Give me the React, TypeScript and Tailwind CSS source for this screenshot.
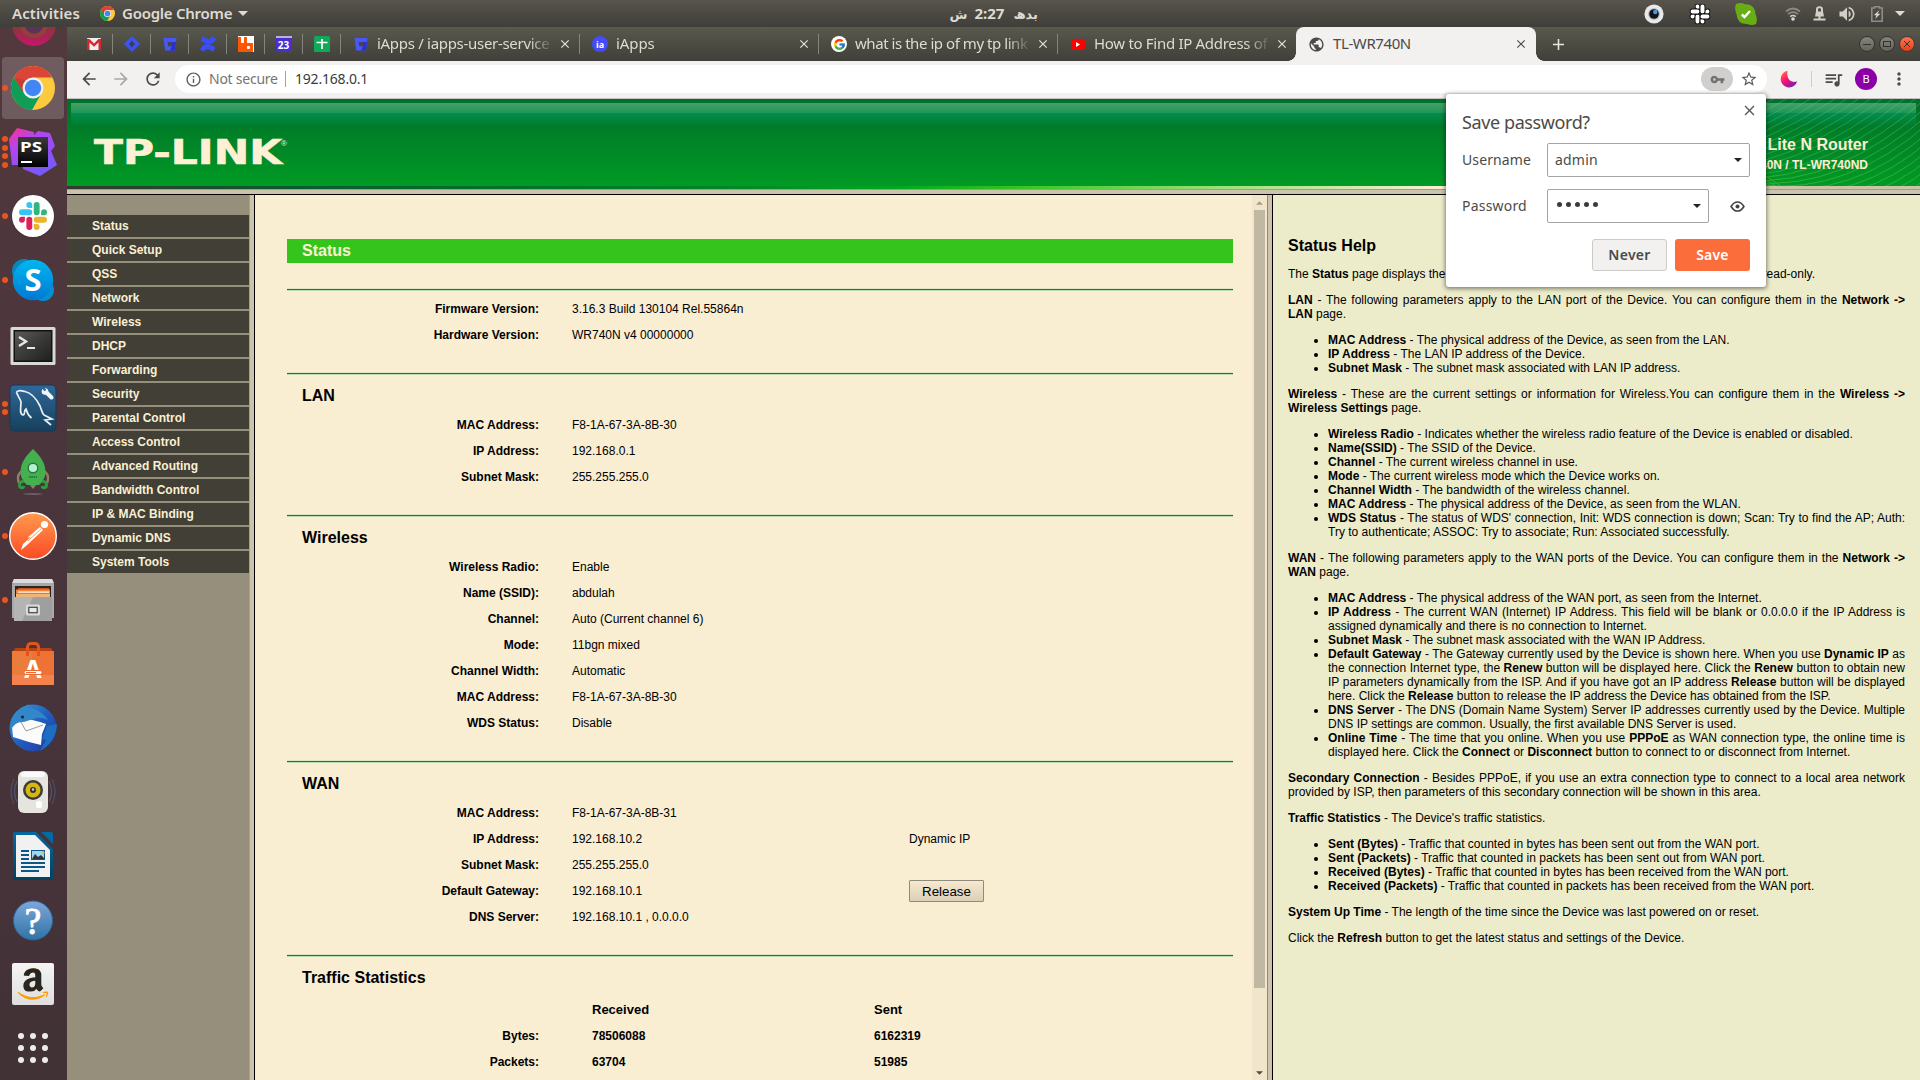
import React from "react";
import {
  MdArrowBack,
  MdArrowForward,
  MdRefresh,
  MdInfoOutline,
  MdVpnKey,
  MdStarBorder,
  MdQueueMusic,
  MdMoreVert,
  MdPublic,
  MdClose,
  MdAdd,
  MdVolumeUp,
} from "react-icons/md";
import { FaConfluence, FaAmazon } from "react-icons/fa";
import { FcGoogle } from "react-icons/fc";
import { SiRabbitmq } from "react-icons/si";

/* ---------- shared icons ---------- */

function ChromeLogo({ size }: { size: number }) {
  return (
    <svg width={size} height={size} viewBox="0 0 48 48">
      <circle cx="24" cy="24" r="24" fill="#fdc93e" />
      <path d="M24 0A24 24 0 0 0 3.2 12L13 30L24 24L24 12.5H45A24 24 0 0 0 24 0Z" fill="#db4437" />
      <path d="M3.2 12A24 24 0 0 0 23 48L33 30L24 34L14 30Z" fill="#0f9d58" />
      <path d="M4 13L14 30L18 16Z" fill="#b3362b" opacity=".5" />
      <circle cx="24" cy="24" r="11.4" fill="#f1f1f1" />
      <circle cx="24" cy="24" r="9" fill="#4285f4" />
    </svg>
  );
}

function SlackLogo({ size, mono }: { size: number; mono?: boolean }) {
  const c = mono ? ["#fff", "#fff", "#fff", "#fff"] : ["#e01e5a", "#36c5f0", "#2eb67d", "#ecb22e"];
  const edge = mono ? { stroke: "#151515", strokeWidth: 2.4, paintOrder: "stroke" } : {};
  return (
    <svg width={size} height={size} viewBox={mono ? "-2 -2 28 28" : "0 0 24 24"} {...edge}>
      <path fill={c[0]} d="M5.042 15.165a2.528 2.528 0 0 1-2.52 2.523A2.528 2.528 0 0 1 0 15.165a2.527 2.527 0 0 1 2.522-2.52h2.52v2.52zM6.313 15.165a2.527 2.527 0 0 1 2.521-2.52 2.527 2.527 0 0 1 2.521 2.52v6.313A2.528 2.528 0 0 1 8.834 24a2.528 2.528 0 0 1-2.521-2.522v-6.313z" />
      <path fill={c[1]} d="M8.834 5.042a2.528 2.528 0 0 1-2.521-2.52A2.528 2.528 0 0 1 8.834 0a2.528 2.528 0 0 1 2.521 2.522v2.52H8.834zM8.834 6.313a2.528 2.528 0 0 1 2.521 2.521 2.528 2.528 0 0 1-2.521 2.521H2.522A2.528 2.528 0 0 1 0 8.834a2.528 2.528 0 0 1 2.522-2.521h6.312z" />
      <path fill={c[2]} d="M18.956 8.834a2.528 2.528 0 0 1 2.522-2.521A2.528 2.528 0 0 1 24 8.834a2.528 2.528 0 0 1-2.522 2.521h-2.522V8.834zM17.688 8.834a2.528 2.528 0 0 1-2.523 2.521 2.527 2.527 0 0 1-2.52-2.521V2.522A2.527 2.527 0 0 1 15.165 0a2.528 2.528 0 0 1 2.523 2.522v6.312z" />
      <path fill={c[3]} d="M15.165 18.956a2.528 2.528 0 0 1 2.523 2.522A2.528 2.528 0 0 1 15.165 24a2.527 2.527 0 0 1-2.52-2.522v-2.522h2.52zM15.165 17.688a2.527 2.527 0 0 1-2.52-2.523 2.526 2.526 0 0 1 2.52-2.52h6.313A2.527 2.527 0 0 1 24 15.165a2.528 2.528 0 0 1-2.522 2.523h-6.313z" />
    </svg>
  );
}

function BitbucketLogo() {
  return (
    <svg width="14" height="13" viewBox="0 0 14 13">
      <path d="M.5 0H13.500L11.800 12.500H2.200Z" fill="#4a57f7" />
      <path d="M4.500 4H13L11.800 12.500H7L9 8.300Z" fill="#2c2fd0" />
      <path d="M4.600 4.200H9.500L8.900 8.300H5.200Z" fill="#48473f" />
    </svg>
  );
}

function Caret({ className }: { className: string }) {
  return (
    <svg viewBox="0 0 10 5" className={className}>
      <path d="M0 0H10L5 5Z" fill="currentColor" />
    </svg>
  );
}

/* ---------- desktop top bar ---------- */

function TopBar() {
  return (
    <div className="flex h-[27px] shrink-0 items-center bg-linear-to-b from-[#57544c] to-[#403e39] font-['Noto_Sans',sans-serif] text-[15px] font-semibold text-[#dfdbd2]">
      <span className="w-[96px] shrink-0 pl-3 tracking-[0.1px]">Activities</span>
      <div className="flex w-[852px] items-center pl-1">
        <ChromeLogo size={15} />
        <span className="ml-[7px] whitespace-nowrap tracking-[-0.25px]">Google Chrome</span>
        <Caret className="ml-[6px] h-[5px] w-[10px]" />
      </div>
      <div dir="rtl" className="w-[90px] whitespace-nowrap font-['DejaVu_Sans',sans-serif] text-[13px] font-bold leading-[27px]">
        <span>بدھ</span>
        <span className="mr-[9px] font-['Noto_Sans'] text-[15px]">2:27</span>
        <span className="mr-[7px]">ش</span>
      </div>
      <div className="ml-auto flex items-center pr-[15px]">
        <svg width="20" height="20" viewBox="0 0 20 20">
          <circle cx="10" cy="10" r="9.6" fill="#e9e9e9" />
          <circle cx="10" cy="10" r="6" fill="#b9bcc0" />
          <circle cx="10" cy="10" r="4.8" fill="#10151c" />
          <circle cx="11.3" cy="8" r="2.2" fill="#4a9ad8" />
        </svg>
        <span className="ml-[25px]">
          <SlackLogo size={22} mono />
        </span>
        <svg width="22" height="22" viewBox="0 0 22 22" className="ml-[24px]">
          <path d="M1 1Q6-1 10 1.200Q20 1 20.500 11Q23 16 21 21Q17 23 12 21Q2 21 1.500 11Q-1 5 1 1Z" fill="#68ad14" />
          <path d="M6.800 11.500L9.500 14L15 8" fill="none" stroke="#fff" strokeWidth="2.400" />
        </svg>
        <svg width="16" height="14" viewBox="0 0 16 14" className="ml-[28px]" fill="none" strokeWidth="1.700">
          <path d="M1 4.500Q8-1.500 15 4.500" stroke="#8b8880" />
          <path d="M3 7.200Q8 3 13 7.200" stroke="#8b8880" />
          <path d="M5.200 9.600Q8 7.400 10.800 9.600" stroke="#d3cfc6" />
          <circle cx="8" cy="12" r="1.800" fill="#dfdbd2" />
        </svg>
        <svg width="13" height="15" viewBox="0 0 13 15" className="ml-[12px]" fill="#d3cfc6">
          <path fillRule="evenodd" d="M3 5.500V3.500A3.500 3.300 0 0 1 10 3.500V5.500L11 10.500H7.500V12.500H12.500V14.500H.5V12.500H5.500V10.500H2ZM5 5.500H8V3.500A1.500 1.500 0 0 0 5 3.500Z" />
        </svg>
        <MdVolumeUp size={20} className="ml-[11px] text-[#d3cfc6]" />
        <svg width="12" height="16" viewBox="0 0 12 16" className="ml-[14px]">
          <path d="M3.500 2V.8H8.500V2H11.200V15.200H.8V2Z" fill="none" stroke="#8f8c85" strokeWidth="1.600" />
          <path d="M8.500 4L2.800 9.200H5.600L4 13L9.300 7.800H6.500Z" fill="#dfdbd2" />
        </svg>
        <Caret className="ml-[12px] h-[5px] w-[10px]" />
      </div>
    </div>
  );
}

/* ---------- dock ---------- */

function DockItem({ dots = 0, active = false, children }: { dots?: number; active?: boolean; children: React.ReactNode }) {
  return (
    <div className="flex h-16 items-center">
      <div className="flex w-[9px] flex-col items-end gap-[2.500px] pr-[1px]">
        {Array.from({ length: dots }).map((_, i) => (
          <span key={i} className="z-10 size-[6px] rounded-full bg-[#e95420]" />
        ))}
      </div>
      <div className={active ? "-ml-[7px] flex h-[62px] w-[62px] items-center justify-center rounded-[4px] bg-white/18" : "ml-0 flex w-12 items-center justify-center"}>
        {children}
      </div>
    </div>
  );
}

function Dock() {
  return (
    <div className="flex w-[67px] shrink-0 flex-col overflow-hidden bg-linear-to-b from-[#51393c] via-[#4a343c] to-[#413236]">
      <div className="flex h-[29px] shrink-0 flex-col items-center overflow-hidden">
        <svg width="44" height="44" viewBox="0 0 44 44" className="-mt-[25px] shrink-0">
          <defs>
            <linearGradient id="ff" x1="0" y1="0" x2="0" y2="1">
              <stop offset=".55" stopColor="#84383c" />
              <stop offset="1" stopColor="#c8146a" />
            </linearGradient>
          </defs>
          <circle cx="22" cy="22" r="22" fill="url(#ff)" />
          <circle cx="22" cy="22" r="14" fill="#943f3c" />
          <circle cx="22" cy="22" r="9.500" fill="#5b3358" />
        </svg>
      </div>
      <DockItem dots={1} active>
        <ChromeLogo size={44} />
      </DockItem>
      <DockItem dots={4}>
        <svg width="48" height="48" viewBox="0 0 48 48">
          <defs>
            <linearGradient id="ps" x1="0" y1="0" x2=".6" y2="1">
              <stop offset="0" stopColor="#ff318c" />
              <stop offset=".35" stopColor="#b345f1" />
              <stop offset="1" stopColor="#765af8" />
            </linearGradient>
            <linearGradient id="psb" x1="0" y1="0" x2="0" y2="1">
              <stop offset="0" stopColor="#3b3b3d" />
              <stop offset="1" stopColor="#000" />
            </linearGradient>
          </defs>
          <path d="M0 11L8 0L25 4V7L29 3L41 5L46 18L42 23L48 37L31 48L14 41V37L3 37Z" fill="url(#ps)" />
          <rect x="9" y="9" width="30" height="30" fill="url(#psb)" />
          <rect x="12" y="33" width="11" height="2" fill="#fff" />
          <text x="11" y="24" fontSize="15" fontWeight="700" fill="#fff" fontFamily="Noto Sans" textLength="22" lengthAdjust="spacingAndGlyphs">PS</text>
        </svg>
      </DockItem>
      <DockItem dots={1}>
        <span className="flex size-[42px] items-center justify-center rounded-full bg-white shadow">
          <SlackLogo size={28} />
        </span>
      </DockItem>
      <DockItem dots={1}>
        <svg width="42" height="42" viewBox="0 0 42 42">
          <defs>
            <linearGradient id="sk" x1="0" y1="0" x2="0" y2="1">
              <stop offset="0" stopColor="#00b7f0" />
              <stop offset="1" stopColor="#0078d4" />
            </linearGradient>
          </defs>
          <circle cx="12" cy="12" r="12" fill="#0a86b8" />
          <circle cx="31" cy="31" r="11" fill="#0490d0" />
          <circle cx="21" cy="21" r="20.200" fill="url(#sk)" />
          <text x="21" y="32" textAnchor="middle" fontSize="31" fontWeight="700" fill="#fff" fontFamily="Open Sans">S</text>
        </svg>
      </DockItem>
      <DockItem>
        <svg width="46" height="40" viewBox="0 0 46 40" className="mt-[4px]">
          <defs>
            <linearGradient id="tm" x1="0" y1="0" x2="1" y2="1">
              <stop offset="0" stopColor="#5a5a58" />
              <stop offset=".5" stopColor="#3a3a39" />
              <stop offset="1" stopColor="#202020" />
            </linearGradient>
          </defs>
          <rect x=".5" y="1" width="45" height="38" rx="1.500" fill="#d8d8d6" />
          <rect x="3.500" y="4" width="39" height="32" fill="#111" />
          <rect x="5" y="5.500" width="36" height="29" fill="url(#tm)" />
          <path d="M9 11L16 15.500L9 20" fill="none" stroke="#e6e6e6" strokeWidth="2.400" />
          <rect x="17" y="21" width="8" height="2" fill="#e6e6e6" />
        </svg>
      </DockItem>
      <DockItem dots={2}>
        <svg width="48" height="48" viewBox="0 0 48 48">
          <defs>
            <linearGradient id="my" x1="0" y1="0" x2="0" y2="1">
              <stop offset="0" stopColor="#2f6899" />
              <stop offset="1" stopColor="#17405c" />
            </linearGradient>
          </defs>
          <rect x="1" y="1" width="46" height="46" rx="4" fill="url(#my)" stroke="#1b3952" />
          <path d="M7.500 8C10 5.500 13 7 16 7.500C23 9 28 16 31 22C33 27 33 29 35 31L43 35L36 36L42 41M7.500 8C8 11 11 14 12 18C12 24 10 30 14 31C17 30 14 27 17 25C18 29 20 32 22.500 34" fill="none" stroke="#e8f1f6" strokeWidth="1.700" />
          <path d="M37 8L42.500 13.500" stroke="#eef6fa" strokeWidth="4" strokeLinecap="round" />
          <circle cx="36" cy="7.500" r="3.300" fill="#eef6fa" />
          <path d="M33 3L36.500 6.500" stroke="#2f6899" strokeWidth="2.200" />
        </svg>
      </DockItem>
      <DockItem dots={1}>
        <svg width="34" height="46" viewBox="0 0 34 46">
          <path d="M6 22Q0 26 3 34M28 22Q34 26 31 34" fill="none" stroke="#8f805f" strokeWidth="2.400" />
          <path d="M13 35H21L17 40Z" fill="#8f805f" />
          <path d="M17 0Q32 14 29 27Q27 33 23 36H11Q7 33 5 27Q2 14 17 0Z" fill="#45b04f" />
          <circle cx="17" cy="19" r="4.800" fill="#b8f0cf" stroke="#257a3f" strokeWidth="1.400" />
          <path d="M13 28H21" stroke="#257a3f" strokeWidth="2" strokeDasharray="1.500 .8" />
          <path d="M8 32Q2 33 4 38Q7 40 8 37M26 32Q32 33 30 38Q27 40 26 37" fill="none" stroke="#2f9e41" strokeWidth="3" />
          <ellipse cx="17" cy="45" rx="10" ry=".8" fill="#7a696d" />
        </svg>
      </DockItem>
      <DockItem dots={1}>
        <svg width="48" height="48" viewBox="0 0 48 48">
          <defs>
            <linearGradient id="pm" x1="0" y1="0" x2="0" y2="1">
              <stop offset="0" stopColor="#ff9a4d" />
              <stop offset="1" stopColor="#fb4a25" />
            </linearGradient>
          </defs>
          <circle cx="24" cy="24" r="23.300" fill="url(#pm)" stroke="#fff" strokeWidth="1.400" />
          <circle cx="35.500" cy="12.500" r="3.600" fill="#fff" />
          <path d="M31 15L34 18L17 34L12 38L14 32L22 25L18 26Z" fill="#fff" />
          <path d="M32 17L19 29M29 15L20 23" stroke="#ff8040" strokeWidth=".8" />
        </svg>
      </DockItem>
      <DockItem dots={1}>
        <svg width="42" height="44" viewBox="0 0 42 44">
          <path d="M2 1H40L42 6V40H0V6Z" fill="#a9a9a9" />
          <path d="M2 1H40L42 5H0Z" fill="#dcdcdc" />
          <rect x="3" y="8" width="36" height="12" fill="#262626" />
          <rect x="6" y="10" width="31" height="3" fill="#c5531c" />
          <rect x="4" y="11.500" width="34" height="4" fill="#f3843a" />
          <rect x="6" y="13.500" width="31" height="1.200" fill="#fff" />
          <rect x="4" y="15.500" width="34" height="4" fill="#efb571" />
          <path d="M2 19H40V43H2Z" fill="#9f9f9f" />
          <path d="M2 19H21L10 43H2Z" fill="#b4b4b4" />
          <rect x="14" y="26.500" width="14" height="11" rx="1.500" fill="#d9d9d9" />
          <rect x="16.800" y="29.300" width="8.400" height="5.400" fill="#e8e8e8" stroke="#444" strokeWidth="1.200" />
        </svg>
      </DockItem>
      <DockItem>
        <svg width="42" height="44" viewBox="0 0 42 44">
          <path d="M1 10L3 6H39L41 10Z" fill="#b8420f" />
          <rect y="9" width="42" height="34" fill="#ee7236" />
          <rect y="9" width="20" height="24" fill="#e8863f" opacity=".6" />
          <rect y="33" width="42" height="10" fill="#f3824d" />
          <path d="M15.500 14V5Q16 1.500 19 1.500H23Q26 1.500 26.500 5V14" fill="none" stroke="#e25417" strokeWidth="3" />
          <text x="21" y="36" textAnchor="middle" fontSize="25" fontWeight="700" fill="#fff" fontFamily="Noto Sans">A</text>
          <rect x="12" y="28.500" width="18" height="4" rx="2" fill="#fff" stroke="#ee6a2f" />
          <rect x="14" y="30" width="10" height="1.200" fill="#ee6a2f" />
        </svg>
      </DockItem>
      <DockItem>
        <svg width="48" height="48" viewBox="0 0 48 48">
          <defs>
            <linearGradient id="tb" x1="0" y1="0" x2="1" y2="1">
              <stop offset="0" stopColor="#3aa0dd" />
              <stop offset=".5" stopColor="#1f5fc0" />
              <stop offset="1" stopColor="#2a2e9b" />
            </linearGradient>
          </defs>
          <circle cx="24" cy="24" r="23.500" fill="url(#tb)" />
          <path d="M48 20Q47 38 31 47L37 36L33 35L38 22Z" fill="#1a6fc0" />
          <path d="M3 23Q8 17 14 15Q22 15 31 18L37 20L33 30L32 41L20 38L4 33Z" fill="#fbfbfb" />
          <path d="M2 26Q3 9 20 0Q17 4 22 4Q32 6 39 16Q30 12 24 15L15 18Q6 17 2 26Z" fill="#3187c8" />
          <path d="M12 18L17 27L34 21" fill="none" stroke="#9a9aa2" strokeWidth="1" />
          <circle cx="13.500" cy="13" r="1.500" fill="#15263d" />
        </svg>
      </DockItem>
      <DockItem>
        <svg width="48" height="44" viewBox="0 0 48 44">
          <path d="M5 9Q-1 22 5 34M43 9Q49 22 43 34" fill="none" stroke="#4b4a60" strokeWidth="1.500" />
          <path d="M8 11Q3 22 8 32M40 11Q45 22 40 32" fill="none" stroke="#525573" strokeWidth="1.200" />
          <rect x="9" y="1" width="30" height="42" rx="6" fill="#e5e4de" />
          <rect x="12" y="2" width="24" height="5" rx="2.500" fill="#fafafa" />
          <circle cx="24" cy="20" r="10" fill="#3b3d3c" />
          <circle cx="24" cy="20" r="7.500" fill="#d8b60e" />
          <circle cx="24" cy="20" r="3" fill="#2e3436" />
          <circle cx="24" cy="19.500" r="1.200" fill="#d7d7d7" />
          <rect x="27" y="31" width="6" height="7" rx="2" fill="#fff" />
        </svg>
      </DockItem>
      <DockItem>
        <svg width="40" height="48" viewBox="0 0 40 48">
          <defs>
            <linearGradient id="lw" x1="0" y1="0" x2="0" y2="1">
              <stop offset="0" stopColor="#0369a3" />
              <stop offset="1" stopColor="#04405f" />
            </linearGradient>
          </defs>
          <path d="M2 0H23L40 17V46Q40 48 38 48H2Q0 48 0 46V2Q0 0 2 0Z" fill="url(#lw)" />
          <path d="M28 0H38Q40 0 40 2V12Z" fill="#0369a3" />
          <path d="M3 3H22L37 18V45H3Z" fill="#f1f1f1" />
          <path d="M8 19H16M8 23H16M8 27H16M8 31H32M8 35H32M8 39H26" stroke="#0b5788" strokeWidth="2" />
          <rect x="18" y="18" width="14" height="10" fill="#0b5788" />
          <rect x="19" y="19" width="12" height="8" fill="#9fd5f5" />
          <path d="M19 27L22 22L25 25L28 23L31 26V27Z" fill="#333" />
          <circle cx="30" cy="20.500" r="1.500" fill="#e8b93c" />
        </svg>
      </DockItem>
      <DockItem>
        <svg width="42" height="42" viewBox="0 0 42 42">
          <defs>
            <linearGradient id="hp" x1="0" y1="0" x2="0" y2="1">
              <stop offset="0" stopColor="#7ea6dc" />
              <stop offset="1" stopColor="#2f74a4" />
            </linearGradient>
          </defs>
          <circle cx="21" cy="21.500" r="19.500" fill="url(#hp)" stroke="#2e6797" />
          <text x="21" y="35" textAnchor="middle" fontSize="37" fill="#fff" stroke="#fff" strokeWidth="1" fontFamily="Liberation Serif">?</text>
        </svg>
      </DockItem>
      <DockItem>
        <span className="relative flex size-[42px] items-center justify-center rounded-[2px] bg-linear-to-b from-[#f4f4f4] to-[#dedede]">
          <FaAmazon size={36} className="text-[#ff9a00]" />
          <FaAmazon size={36} className="absolute text-[#262626] [clip-path:inset(0_0_30%_0)]" />
        </span>
      </DockItem>
      <DockItem>
        <div className="grid grid-cols-3 gap-[6px]">
          {Array.from({ length: 9 }).map((_, i) => (
            <span key={i} className="size-[6px] rounded-full bg-[#eeeceb]" />
          ))}
        </div>
      </DockItem>
    </div>
  );
}

/* ---------- browser chrome ---------- */

const PINNED: React.ReactNode[] = [
  <svg width="14" height="12" viewBox="0 0 14 12">
    <rect width="14" height="12" rx="1" fill="#efefef" />
    <path d="M0 1H2.500L7 5.500L11.500 1H14V12H11.500V4.500L7 8.800L2.500 4.500V12H0Z" fill="#d8262c" />
  </svg>,
  <svg width="16" height="16" viewBox="0 0 16 16">
    <path d="M8 0L16 8L8 16L0 8Z" fill="#3b55f5" />
    <path d="M8 5L11 8L8 11L5 8Z" fill="#3f3e38" />
    <path d="M8 0L8 5L5 8L8 11L6 14Z" fill="#2334b8" opacity=".5" />
  </svg>,
  <BitbucketLogo />,
  <FaConfluence size={16} className="text-[#3b4df5]" />,
  <span className="flex size-4 items-center justify-center bg-white">
    <SiRabbitmq size={15} className="text-[#ff5400]" />
  </span>,
  <span className="flex h-4 w-4 items-end justify-center border-t-2 border-[#b9b5cf] bg-[#4a2fd0] font-['Noto_Sans'] text-[10px] font-bold leading-[14px] text-white">23</span>,
  <svg width="16" height="16" viewBox="0 0 16 16">
    <rect width="16" height="16" rx="1.500" fill="#0fa958" />
    <path d="M8 3V13M2.500 6.500H13.500" stroke="#fff" strokeWidth="1.700" />
  </svg>,
];

const TABS: { icon: React.ReactNode; title: string; cls: string }[] = [
  { icon: <BitbucketLogo />, title: "iApps / iapps-user-service", cls: "tracking-[-0.3px]" },
  {
    icon: <span className="flex size-4 items-center justify-center rounded-full bg-[#444cf7] text-[9px] font-bold leading-none text-white">ia</span>,
    title: "iApps",
    cls: "tracking-[-0.1px]",
  },
  {
    icon: (
      <span className="flex size-4 items-center justify-center rounded-full bg-white">
        <FcGoogle size={13} />
      </span>
    ),
    title: "what is the ip of my tp link",
    cls: "tracking-[-0.45px]",
  },
  {
    icon: (
      <span className="flex h-[11px] w-[14px] items-center justify-center rounded-[3px] bg-[#f00]">
        <svg width="4" height="5" viewBox="0 0 4 5"><path d="M0 0L4 2.500L0 5Z" fill="#fff" /></svg>
      </span>
    ),
    title: "How to Find IP Address of",
    cls: "tracking-[-0.3px]",
  },
];

function WindowButton({ kind }: { kind: "min" | "max" | "close" }) {
  return (
    <span className={kind === "close" ? "flex size-4 items-center justify-center rounded-full border border-[#3b3a35] bg-linear-to-b from-[#f97450] to-[#e63f0c]" : "flex size-4 items-center justify-center rounded-full border border-[#34332f] bg-linear-to-b from-[#85847c] to-[#65645d]"}>
      <svg width="8" height="8" viewBox="0 0 8 8" fill="none" stroke="#33322e" strokeWidth="1">
        {kind === "min" && <path d="M0 4.500H8" />}
        {kind === "max" && <rect x=".5" y="1.500" width="7" height="5" />}
        {kind === "close" && <path d="M1 1L7 7M7 1L1 7" />}
      </svg>
    </span>
  );
}

function TabStrip() {
  return (
    <div className="flex h-[34px] shrink-0 items-center bg-linear-to-b from-[#5a594e] to-[#403f39] pl-2 font-['Noto_Sans',sans-serif] text-[15px] text-[#dedbd0]">
      {PINNED.map((icon, i) => (
        <div key={i} className="flex h-5 w-[38px] shrink-0 items-center justify-center border-r border-[#85847a]">
          {icon}
        </div>
      ))}
      {TABS.map((t, i) => (
        <div key={t.title} className={i < 3 ? "flex h-5 w-[239px] shrink-0 items-center border-r border-[#85847a] pl-3" : "flex h-5 w-[238px] shrink-0 items-center pl-3"}>
          <span className="flex w-4 justify-center">{t.icon}</span>
          <span className={"-mt-px ml-2 w-[174px] overflow-hidden whitespace-nowrap [mask-image:linear-gradient(to_right,black_87%,transparent_102%)] " + t.cls}>{t.title}</span>
          <MdClose size={14} className="ml-[7px] text-[#e8e6dc]" />
        </div>
      ))}
      <div className="relative flex h-full w-[240px] shrink-0 items-center rounded-t-[8px] bg-[#f2f1f0] pl-3 text-[#4c4b48]">
        <span className="absolute -left-2 bottom-0 size-2 bg-[radial-gradient(circle_at_0_0,transparent_7.5px,#f2f1f0_8px)]" />
        <span className="absolute -right-2 bottom-0 size-2 bg-[radial-gradient(circle_at_100%_0,transparent_7.5px,#f2f1f0_8px)]" />
        <MdPublic size={17} className="text-[#4a4a4a]" />
        <span className="-mt-px ml-[8px] w-[174px] tracking-[-0.4px]">TL-WR740N</span>
        <MdClose size={14} className="ml-[7px]" />
      </div>
      <MdAdd size={19} className="ml-[13px] text-[#e8e6dc]" />
      <div className="ml-auto mr-[5px] flex items-center gap-1">
        <WindowButton kind="min" />
        <WindowButton kind="max" />
        <WindowButton kind="close" />
      </div>
    </div>
  );
}

function Toolbar() {
  return (
    <div className="flex h-[38px] shrink-0 items-center border-b border-[#c4c2be] bg-[#f2f1f0] pb-px pl-3 font-['Noto_Sans',sans-serif] text-[14px]">
      <MdArrowBack size={20} className="text-[#4a4a4a]" />
      <MdArrowForward size={20} className="ml-3 text-[#a9a8a6]" />
      <MdRefresh size={20} className="ml-3 text-[#4a4a4a]" />
      <div className="ml-[12px] flex h-7 w-[1592px] items-center rounded-full bg-white pl-[10px] text-[#77746f]">
        <MdInfoOutline size={17} className="text-[#5f5f5f]" />
        <span className="-mt-px ml-[7px] w-[76px] whitespace-nowrap tracking-[-0.25px]">Not secure</span>
        <span className="h-4 w-px bg-[#a5a4a2]" />
        <span className="-mt-px ml-[9px] tracking-[-0.2px] text-[#3c3b37]">192.168.0.1</span>
        <span className="ml-auto flex h-6 w-8 items-center justify-center rounded-full bg-[#d0cfce]">
          <MdVpnKey size={15} className="text-[#73716e]" />
        </span>
        <MdStarBorder size={18} className="ml-[7px] mr-[9px] text-[#5a5a5a]" />
      </div>
      <svg width="18" height="18" viewBox="0 0 18 18" className="ml-[13px]">
        <defs>
          <linearGradient id="moon" x1="0" y1="0" x2=".7" y2="1">
            <stop offset="0" stopColor="#ff8a1f" />
            <stop offset=".5" stopColor="#ff0f7b" />
            <stop offset="1" stopColor="#7a1fa8" />
          </linearGradient>
        </defs>
        <path d="M7.500 .8A8.400 8.400 0 1 0 17.200 11.200Q13.500 13 10 10.500T7.500 .8Z" fill="url(#moon)" />
      </svg>
      <span className="ml-[13px] h-4 w-px bg-[#cfcdca]" />
      <MdQueueMusic size={21} className="ml-[11px] text-[#4a4a4a]" />
      <span className="ml-[11px] flex size-[22px] items-center justify-center rounded-full bg-[#8a00a5] text-[11px] text-white">B</span>
      <MdMoreVert size={20} className="ml-3 text-[#4a4a4a]" />
    </div>
  );
}

/* ---------- router page ---------- */

function Header() {
  return (
    <div className="shrink-0">
      <div className="relative h-[87px] overflow-hidden bg-linear-to-b from-[#00712c] from-5% via-[#007c28] via-30% to-[#009a24]">
        <div className="absolute inset-x-1 top-1 h-[10px] bg-linear-to-b from-[#44a168] to-[#1c9556]" />
        <div className="absolute inset-x-1 top-[14px] h-[14px] bg-linear-to-b from-[#008e4d] to-[#007b28]" />
        <svg className="absolute right-0 top-0" width="500" height="87" viewBox="0 0 500 87" fill="none" strokeWidth="1" opacity=".32">
          {Array.from({ length: 26 }).map((_, i) => (
            <path key={i} stroke={i < 14 ? "#6fcf9a" : "#9bdc5f"} d={`M${10 + i * 9} -20Q${190 + i * 9} 170 ${510} ${-130 + i * 9}`} />
          ))}
        </svg>
        <svg className="absolute left-[24px] top-[34px] overflow-visible" width="220" height="40">
          <text x="3" y="30.500" fontSize="33" fontWeight="700" fontFamily="DejaVu Sans" fill="#fdf0d5" stroke="#fdf0d5" strokeWidth=".6" textLength="188" lengthAdjust="spacingAndGlyphs">TP-LINK</text>
          <text x="190" y="13" fontSize="8" fontFamily="Liberation Sans" fill="#fdf0d5">®</text>
        </svg>
        <div className="absolute right-[52px] top-[37px] text-right font-bold text-[#fbeed3]">
          <div className="text-[16px] leading-[18px]">150Mbps Wireless Lite N Router</div>
          <div className="mt-[4px] text-[12px] leading-[14px]">Model No. TL-WR740N / TL-WR740ND</div>
        </div>
      </div>
      <div className="h-[3px] bg-[linear-gradient(to_right,#35392f_0,#0a5a30_12%,#008526_35%,#00a820_45%,#33c41e_51%,#9bde78_62%,#fbeed3_74%,#cdc3ab_84%,#cdc3ab_100%)]" />
      <div className="h-px bg-[#a89c88]" />
      <div className="h-1 bg-[#cdc3ab]" />
      <div className="h-px bg-black" />
    </div>
  );
}

const MENU = ["Status", "Quick Setup", "QSS", "Network", "Wireless", "DHCP", "Forwarding", "Security", "Parental Control", "Access Control", "Advanced Routing", "Bandwidth Control", "IP & MAC Binding", "Dynamic DNS", "System Tools"];

function Rule() {
  return (
    <div className="h-[3px]">
      <div className="h-px bg-[#dfe5c3]" />
      <div className="h-px bg-[#0f7d3a]" />
      <div className="h-px bg-[#b9dcb0]" />
    </div>
  );
}

function Section({ title, rows, children }: { title?: string; rows: [string, string, React.ReactNode?][]; children?: React.ReactNode }) {
  return (
    <section className="pb-[24px]">
      <Rule />
      {title ? <h2 className="h-[37px] pl-[15px] pt-[12px] text-[16px] font-bold leading-[18px]">{title}</h2> : <div className="h-[5px]" />}
      {rows.map(([k, v, extra], i) => (
        <div key={i} className="flex h-[26px] items-center">
          <div className="w-[252px] text-right font-bold">{k}</div>
          <div className="ml-[33px] w-[337px]">{v}</div>
          {extra}
        </div>
      ))}
      {children}
    </section>
  );
}

function StatusPage() {
  return (
    <div className="flex min-w-0 flex-1 overflow-hidden bg-[#f9edd2]">
      <div className="w-[978px] pl-8 pt-[44px] text-[12px] text-black">
        <h1 className="mb-[25px] flex h-6 items-center bg-[#35c41c] pl-[15px] text-[16px] font-bold text-[#fbf3d0]">Status</h1>
        <Section rows={[["Firmware Version:", "3.16.3 Build 130104 Rel.55864n"], ["Hardware Version:", "WR740N v4 00000000"]]} />
        <Section title="LAN" rows={[["MAC Address:", "F8-1A-67-3A-8B-30"], ["IP Address:", "192.168.0.1"], ["Subnet Mask:", "255.255.255.0"]]} />
        <Section
          title="Wireless"
          rows={[
            ["Wireless Radio:", "Enable"],
            ["Name (SSID):", "abdulah"],
            ["Channel:", "Auto (Current channel 6)"],
            ["Mode:", "11bgn mixed"],
            ["Channel Width:", "Automatic"],
            ["MAC Address:", "F8-1A-67-3A-8B-30"],
            ["WDS Status:", "Disable"],
          ]}
        />
        <Section
          title="WAN"
          rows={[
            ["MAC Address:", "F8-1A-67-3A-8B-31"],
            ["IP Address:", "192.168.10.2", "Dynamic IP"],
            ["Subnet Mask:", "255.255.255.0"],
            [
              "Default Gateway:",
              "192.168.10.1",
              <button key="r" className="h-[22px] w-[75px] rounded-[1px] border border-[#918b7d] bg-linear-to-b from-[#f6e9cf] to-[#dccfb8] pt-px text-[13.333px] leading-[20px]">
                Release
              </button>,
            ],
            ["DNS Server:", "192.168.10.1 , 0.0.0.0"],
          ]}
        />
        <Section title="Traffic Statistics" rows={[]}>
          <div className="grid grid-cols-[252px_53px_282px_200px] pt-[3px] font-bold leading-[26px]">
            <span />
            <span />
            <span className="text-[13px]">Received</span>
            <span className="text-[13px]">Sent</span>
            <span className="text-right">Bytes:</span>
            <span />
            <span>78506088</span>
            <span>6162319</span>
            <span className="text-right">Packets:</span>
            <span />
            <span>63704</span>
            <span>51985</span>
          </div>
        </Section>
      </div>
      <div className="ml-auto flex w-[15px] flex-col items-center bg-[#f1e5cb]">
        <div className="flex h-[15px] items-center text-[#a59c8a]">
          <Caret className="h-[4px] w-[7px] rotate-180" />
        </div>
        <div className="h-[778px] w-[11px] bg-[#c1b8a3]" />
        <div className="mt-auto flex h-[15px] items-center text-[#504c44]">
          <Caret className="h-[4px] w-[7px]" />
        </div>
      </div>
    </div>
  );
}

function Help() {
  return (
    <div className="w-[648px] shrink-0 overflow-hidden border-l border-black bg-[#ececcb] pl-[15px] pr-[15px] pt-[42px] text-justify text-[12px] leading-[14px] text-black [&_p]:mb-3 [&_ul]:mb-3 [&_ul]:list-disc [&_ul]:pl-10">
      <h2 className="mb-[12px] text-[16px] font-bold leading-[18px]">Status Help</h2>
      <p>The <b>Status</b> page displays the Device's current status and configuration. All information is read-only.</p>
      <p><b>LAN</b> - The following parameters apply to the LAN port of the Device. You can configure them in the <b>Network -&gt; LAN</b> page.</p>
      <ul>
        <li><b>MAC Address</b> - The physical address of the Device, as seen from the LAN.</li>
        <li><b>IP Address</b> - The LAN IP address of the Device.</li>
        <li><b>Subnet Mask</b> - The subnet mask associated with LAN IP address.</li>
      </ul>
      <p><b>Wireless</b> - These are the current settings or information for Wireless.You can configure them in the <b>Wireless -&gt; Wireless Settings</b> page.</p>
      <ul>
        <li><b>Wireless Radio</b> - Indicates whether the wireless radio feature of the Device is enabled or disabled.</li>
        <li><b>Name(SSID)</b> - The SSID of the Device.</li>
        <li><b>Channel</b> - The current wireless channel in use.</li>
        <li><b>Mode</b> - The current wireless mode which the Device works on.</li>
        <li><b>Channel Width</b> - The bandwidth of the wireless channel.</li>
        <li><b>MAC Address</b> - The physical address of the Device, as seen from the WLAN.</li>
        <li><b>WDS Status</b> - The status of WDS' connection, Init: WDS connection is down; Scan: Try to find the AP; Auth: Try to authenticate; ASSOC: Try to associate; Run: Associated successfully.</li>
      </ul>
      <p><b>WAN</b> - The following parameters apply to the WAN ports of the Device. You can configure them in the <b>Network -&gt; WAN</b> page.</p>
      <ul>
        <li><b>MAC Address</b> - The physical address of the WAN port, as seen from the Internet.</li>
        <li><b>IP Address</b> - The current WAN (Internet) IP Address. This field will be blank or 0.0.0.0 if the IP Address is assigned dynamically and there is no connection to Internet.</li>
        <li><b>Subnet Mask</b> - The subnet mask associated with the WAN IP Address.</li>
        <li><b>Default Gateway</b> - The Gateway currently used by the Device is shown here. When you use <b>Dynamic IP</b> as the connection Internet type, the <b>Renew</b> button will be displayed here. Click the <b>Renew</b> button to obtain new IP parameters dynamically from the ISP. And if you have got an IP address <b>Release</b> button will be displayed here. Click the <b>Release</b> button to release the IP address the Device has obtained from the ISP.</li>
        <li><b>DNS Server</b> - The DNS (Domain Name System) Server IP addresses currently used by the Device. Multiple DNS IP settings are common. Usually, the first available DNS Server is used.</li>
        <li><b>Online Time</b> - The time that you online. When you use <b>PPPoE</b> as WAN connection type, the online time is displayed here. Click the <b>Connect</b> or <b>Disconnect</b> button to connect to or disconnect from Internet.</li>
      </ul>
      <p><b>Secondary Connection</b> - Besides PPPoE, if you use an extra connection type to connect to a local area network provided by ISP, then parameters of this secondary connection will be shown in this area.</p>
      <p><b>Traffic Statistics</b> - The Device's traffic statistics.</p>
      <ul>
        <li><b>Sent (Bytes)</b> - Traffic that counted in bytes has been sent out from the WAN port.</li>
        <li><b>Sent (Packets)</b> - Traffic that counted in packets has been sent out from WAN port.</li>
        <li><b>Received (Bytes)</b> - Traffic that counted in bytes has been received from the WAN port.</li>
        <li><b>Received (Packets)</b> - Traffic that counted in packets has been received from the WAN port.</li>
      </ul>
      <p><b>System Up Time</b> - The length of the time since the Device was last powered on or reset.</p>
      <p>Click the <b>Refresh</b> button to get the latest status and settings of the Device.</p>
    </div>
  );
}

function PasswordDialog() {
  return (
    <div className="absolute left-[1446px] top-[94px] h-[193px] w-[320px] rounded-[3px] bg-white pl-4 pr-4 font-['Noto_Sans',sans-serif] text-[14px] text-[#4c4b48] shadow-[0_1px_4px_1px_rgba(0,0,0,0.45)]">
      <MdClose size={17} className="absolute right-2 top-2 text-[#5c5c5c]" />
      <div className="pt-[16px] text-[18px] leading-6 tracking-[-0.4px]">Save password?</div>
      <div className="mt-[9px] flex h-[34px] items-center">
        <span className="-mt-[2px] w-[85px] tracking-[0.1px]">Username</span>
        <div className="flex h-[34px] w-[203px] items-center justify-between rounded-[2px] border border-[#a5a4a2] px-[7px]">
          <span className="-mt-[2px] tracking-[0.2px]">admin</span>
          <Caret className="h-[4px] w-[8px] text-[#222]" />
        </div>
      </div>
      <div className="mt-3 flex h-[34px] items-center">
        <span className="-mt-[2px] w-[85px] tracking-[0.2px]">Password</span>
        <div className="flex h-[34px] w-[162px] items-center justify-between rounded-[2px] border border-[#a5a4a2] pl-[9px] pr-[7px]">
          <span className="mb-[3px] flex gap-1">
            {[0, 1, 2, 3, 4].map((i) => (
              <span key={i} className="size-[5px] rounded-full bg-[#3c3b37]" />
            ))}
          </span>
          <Caret className="h-[4px] w-[8px] text-[#222]" />
        </div>
        <svg width="15" height="11" viewBox="0 0 16 12" className="ml-[21px]" fill="none" stroke="#44433f" strokeWidth="1.700">
          <path d="M1 6Q4 1 8 1T15 6Q12 11 8 11T1 6Z" />
          <circle cx="8" cy="6" r="2.200" fill="#44433f" stroke="none" />
        </svg>
      </div>
      <div className="mt-4 flex justify-end gap-2 font-semibold">
        <button className="h-8 w-[75px] rounded-[3px] border border-[#cdcbc8] bg-[#f2f1f0] leading-none tracking-[0.3px]">Never</button>
        <button className="h-8 w-[75px] rounded-[3px] bg-[#fb6d3a] leading-none tracking-[0.2px] text-white">Save</button>
      </div>
    </div>
  );
}

export default function App() {
  return (
    <div className="relative flex h-[1080px] w-[1920px] flex-col overflow-hidden bg-[#403e39] font-['Liberation_Sans',Arial,sans-serif]">
      <TopBar />
      <div className="flex min-h-0 flex-1">
        <Dock />
        <div className="flex min-w-0 flex-1 flex-col">
          <TabStrip />
          <Toolbar />
          <Header />
          <div className="flex min-h-0 flex-1">
            <nav className="flex w-[182px] shrink-0 flex-col gap-[2px] bg-[#958f7b] pt-5">
              {MENU.map((m) => (
                <div key={m} className="h-[22px] bg-[#423f37] pl-[25px] text-[12px] font-bold leading-[23px] text-[#fbf0d2]">
                  {m}
                </div>
              ))}
            </nav>
            <div className="w-[5px] shrink-0 border-l border-[#a89f8b] bg-[#cdc3ab]" />
            <div className="w-px shrink-0 bg-black" />
            <StatusPage />
            <div className="w-[5px] shrink-0 border-l border-[#918876] bg-[#cdc3ab]" />
            <Help />
          </div>
        </div>
      </div>
      <PasswordDialog />
    </div>
  );
}
